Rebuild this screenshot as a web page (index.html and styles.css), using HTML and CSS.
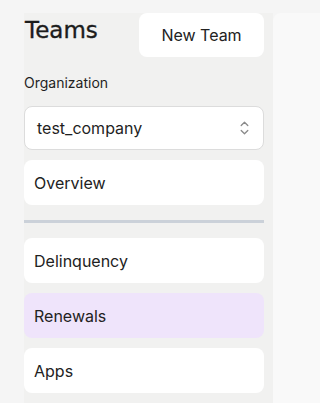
FILE: index.html
```html
<!DOCTYPE html>
<html>
<head>
<meta charset="utf-8">
<link rel="stylesheet" href="styles.css">
</head>
<body>
<div class="layout">
  <aside class="sidebar">
    <div class="header">
      <h1 class="title">Teams</h1>
      <button class="new-team">New Team</button>
    </div>
    <label class="org-label">Organization</label>
    <div class="select">
      <span class="select-value">test_company</span>
      <svg class="chevrons" width="9" height="16" viewBox="0 0 9 16" fill="none" stroke="#8a8a8a" stroke-width="1.3" stroke-linecap="round" stroke-linejoin="round">
        <path d="M1.2 5.5 L4.5 2.2 L7.8 5.5"/>
        <path d="M1.2 10.5 L4.5 13.8 L7.8 10.5"/>
      </svg>
    </div>
    <nav class="nav">
      <a class="nav-item">Overview</a>
      <hr class="divider">
      <a class="nav-item">Delinquency</a>
      <a class="nav-item active">Renewals</a>
      <a class="nav-item">Apps</a>
    </nav>
  </aside>
  <main class="content"></main>
</div>
</body>
</html>
```

FILE: styles.css
```css
html, body {
  margin: 0;
  padding: 0;
  height: 100%;
}
body {
  background: #f5f5f5;
  font-family: "Inter", "Liberation Sans", sans-serif;
  color: #1f1f1f;
  overflow: hidden;
}
.layout {
  display: flex;
  padding: 13px 0 0 24px;
  height: 100%;
  box-sizing: border-box;
}
.sidebar {
  width: 240px;
  flex: none;
  padding-right: 9px;
  background: #f1f1f0;
  display: flex;
  flex-direction: column;
}
.header {
  display: flex;
  justify-content: space-between;
  align-items: flex-start;
  height: 44px;
}
.title {
  margin: 0;
  font-family: "DejaVu Sans", "Noto Sans", sans-serif;
  font-weight: normal;
  font-size: 23px;
  line-height: 32px;
  padding-top: 1px;
  color: #1c1c1c;
  -webkit-text-stroke: 0.35px #1c1c1c;
  padding-left: 1px;
}
.new-team {
  width: 125px;
  height: 44px;
  border: none;
  border-radius: 8px;
  background: #ffffff;
  font-family: "Inter", "Liberation Sans", sans-serif;
  font-size: 16px;
  color: #222;
  padding: 0;
}
.org-label {
  margin-top: 16px;
  font-size: 14px;
  line-height: 20px;
  color: #1f1f1f;
}
.select {
  margin-top: 13px;
  height: 44px;
  box-sizing: border-box;
  border: 1px solid #dcdcdc;
  border-radius: 8px;
  background: #fff;
  display: flex;
  align-items: center;
  justify-content: space-between;
  padding: 0 14px 0 12px;
}
.select-value {
  font-size: 16px;
  color: #1f1f1f;
}
.nav {
  margin-top: 10px;
  display: flex;
  flex-direction: column;
  gap: 10px;
}
.nav-item {
  height: 45px;
  display: flex;
  align-items: center;
  padding-left: 10px;
  background: #fff;
  border-radius: 8px;
  font-size: 16px;
  color: #222;
}
.nav-item.active {
  background: #efe4fb;
}
.divider {
  margin: 5px 0;
  border: none;
  height: 3px;
  background: #cbd1d9;
}
.content {
  flex: 1;
  background: #f9f9f9;
  border-top-left-radius: 8px;
}
```
